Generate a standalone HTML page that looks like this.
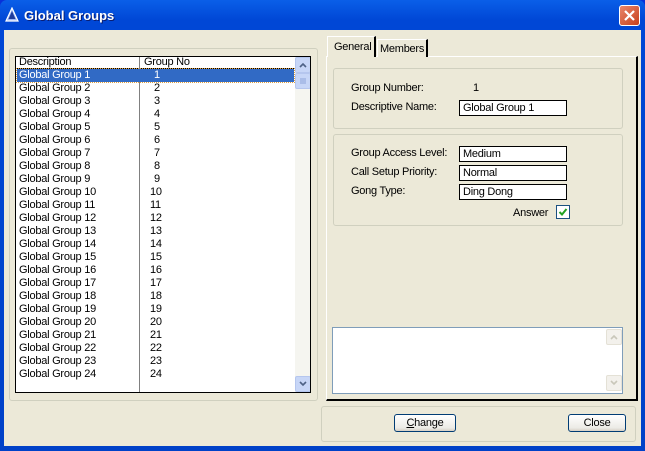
<!DOCTYPE html><html><head><style>
*{margin:0;padding:0;box-sizing:border-box}
body{width:645px;height:451px;overflow:hidden;font-family:"Liberation Sans",sans-serif;font-size:11px;color:#000;background:#0831D9;letter-spacing:-0.25px}
.win{position:absolute;left:0;top:0;width:645px;height:451px;background:linear-gradient(#0A5FE8,#0047D6 20px,#0041C8);border-radius:7px 7px 0 0}
.title{position:absolute;left:24px;top:8px;color:#fff;font-weight:bold;font-size:13px;text-shadow:1px 1px #0a1d70;letter-spacing:0}
.body{position:absolute;left:4px;top:30px;width:637px;height:416px;background:#ECE9D8}
.a{position:absolute}
.grp{position:absolute;border:1px solid #D0D0BF;border-radius:3px}
.lv{position:absolute;left:15px;top:56px;width:296px;height:337px;border:1px solid #000;background:#fff;overflow:hidden}
.row{position:absolute;left:0;height:13px;line-height:13px;width:279px}
.row span{position:absolute}
.tb{position:absolute;height:16px;background:#fff;border:1px solid #000;padding-left:3px;line-height:14px}
.btn{position:absolute;height:18px;border:1px solid #003C74;border-radius:3px;background:linear-gradient(#fff,#ECEBE6 80%,#D6D0C5);text-align:center;line-height:16px}
.sb{position:absolute;width:16px;height:16px;border-radius:2px}
</style></head><body>
<div class="win">
<svg class="a" style="left:5px;top:7px" width="14" height="16"><polygon points="7,1 13,14 1,14" fill="#9BB4F4" stroke="#fff" stroke-width="1.2"/><polygon points="7,4 10.5,12 3.5,12" fill="#1F3C9C"/></svg>
<div class="title">Global Groups</div>
<div class="a" style="left:619px;top:5px;width:21px;height:21px;border:1px solid #fff;border-radius:3px;background:linear-gradient(135deg,#E8866A,#C8401C)"><svg width="19" height="19"><path d="M5 5L14 14M14 5L5 14" stroke="#fff" stroke-width="2.2"/></svg></div>
<div class="body"></div>
<div class="grp" style="left:9px;top:48px;width:309px;height:353px"></div>
<div class="lv">
<div class="a" style="left:0;top:0;width:279px;height:12px;border-bottom:1px solid #000;line-height:11px"><span class="a" style="left:3px">Description</span><span class="a" style="left:123px;top:0;height:337px;border-left:1px solid #808080"></span><span class="a" style="left:128px">Group No</span></div>
<div class="a" style="left:1px;top:12px;width:277px;height:13px;background:#316AC5;outline:1px dotted #E0A040"></div>
<div id="rows"></div>
<div class="a" style="left:279px;top:0;width:16px;height:335px;background:#F5F5F0"></div>
<div class="sb" style="left:279px;top:0;background:#C7D6F7;border:1px solid #B5C6EE"><svg width="14" height="14"><path d="M4 9L7 6L10 9" stroke="#4D6185" stroke-width="1.6" fill="none"/></svg></div>
<div class="sb" style="left:279px;top:16px;background:#C7D6F7;border:1px solid #B5C6EE"><svg width="14" height="14"><path d="M4 5H10M4 7H10M4 9H10" stroke="#8CA4DA"/></svg></div>
<div class="sb" style="left:279px;top:319px;background:#C7D6F7;border:1px solid #B5C6EE"><svg width="14" height="14"><path d="M4 5L7 8L10 5" stroke="#4D6185" stroke-width="1.6" fill="none"/></svg></div>
</div>
<div class="a" style="left:326px;top:56px;width:312px;height:345px;background:#ECE9D8;border:1px solid #fff;border-right:2px solid #000;border-bottom:2px solid #000"></div>
<div class="a" style="left:327px;top:36px;width:49px;height:21px;background:#ECE9D8;border:1px solid #fff;border-right:2px solid #000;border-bottom:none;padding:4px 0 0 6px">General</div>
<div class="a" style="left:377px;top:39px;width:51px;height:18px;background:#ECE9D8;border:1px solid #fff;border-right:2px solid #000;border-bottom:none;padding:3px 0 0 2px">Members</div>
<div class="grp" style="left:333px;top:68px;width:290px;height:61px"></div>
<div class="a" style="left:351px;top:82px">Group Number:</div>
<div class="a" style="left:473px;top:82px">1</div>
<div class="a" style="left:351px;top:101px">Descriptive Name:</div>
<div class="tb" style="left:459px;top:100px;width:108px">Global Group 1</div>
<div class="grp" style="left:333px;top:134px;width:290px;height:92px"></div>
<div class="a" style="left:351px;top:147px">Group Access Level:</div>
<div class="tb" style="left:459px;top:146px;width:108px">Medium</div>
<div class="a" style="left:351px;top:166px">Call Setup Priority:</div>
<div class="tb" style="left:459px;top:165px;width:108px">Normal</div>
<div class="a" style="left:351px;top:185px">Gong Type:</div>
<div class="tb" style="left:459px;top:184px;width:108px">Ding Dong</div>
<div class="a" style="left:513px;top:207px">Answer</div>
<div class="a" style="left:556px;top:205px;width:14px;height:14px;border:1px solid #1C5180;background:#fff"><svg width="12" height="12"><path d="M2.5 6L5 8.5L9.5 3" stroke="#21A121" stroke-width="2" fill="none"/></svg></div>
<div class="a" style="left:332px;top:327px;width:291px;height:67px;border:1px solid #7F9DB9;background:#fff"></div>
<div class="sb" style="left:606px;top:329px;background:#F3F1EC;border:1px solid #E4E1D6"><svg width="14" height="14"><path d="M4 9L7 6L10 9" stroke="#C9C7BA" stroke-width="1.6" fill="none"/></svg></div>
<div class="sb" style="left:606px;top:375px;background:#F3F1EC;border:1px solid #E4E1D6"><svg width="14" height="14"><path d="M4 5L7 8L10 5" stroke="#C9C7BA" stroke-width="1.6" fill="none"/></svg></div>
<div class="grp" style="left:321px;top:406px;width:315px;height:36px"></div>
<div class="btn" style="left:394px;top:414px;width:62px"><u>C</u>hange</div>
<div class="btn" style="left:568px;top:414px;width:58px">Close</div>
</div>
<script>
var h='';for(var i=1;i<=24;i++){var t=(i-1)*13+12;h+='<div class="row" style="top:'+t+'px;'+(i==1?'color:#fff':'')+'"><span style="left:3px">Global Group '+i+'</span><span style="left:'+(i<10?138:134)+'px">'+i+'</span></div>'}
document.getElementById('rows').innerHTML=h;
</script>
</body></html>
